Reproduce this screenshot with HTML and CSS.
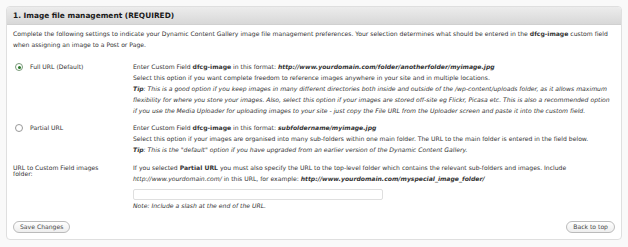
FILE: index.html
```html
<!DOCTYPE html>
<html>
<head>
<meta charset="utf-8">
<link rel="stylesheet" href="styles.css">
</head>
<body>
<div class="postbox">
  <h3 class="hndle">1. Image file management (REQUIRED)</h3>
  <div class="inside">
    <p class="intro">Complete the following settings to indicate your Dynamic Content Gallery image file management preferences. Your selection determines what should be entered in the <b>dfcg-image</b> custom field when assigning an image to a Post or Page.</p>
    <div class="row row-full">
      <div class="label"><span class="radio checked"></span>Full URL (Default)</div>
      <div class="content">
        <div>Enter Custom Field <b>dfcg-image</b> in this format: <b><i>http://www.yourdomain.com/folder/anotherfolder/myimage.jpg</i></b></div>
        <div>Select this option if you want complete freedom to reference images anywhere in your site and in multiple locations.</div>
        <div class="tip"><b>Tip</b>: This is a good option if you keep images in many different directories both inside and outside of the /wp-content/uploads folder, as it allows maximum flexibility for where you store your images. Also, select this option if your images are stored off-site eg Flickr, Picasa etc. This is also a recommended option if you use the Media Uploader for uploading images to your site - just copy the File URL from the Uploader screen and paste it into the custom field.</div>
      </div>
    </div>
    <div class="row row-partial">
      <div class="label"><span class="radio"></span>Partial URL</div>
      <div class="content">
        <div>Enter Custom Field <b>dfcg-image</b> in this format: <b><i>subfoldername/myimage.jpg</i></b></div>
        <div>Select this option if your images are organised into many sub-folders within one main folder. The URL to the main folder is entered in the field below.</div>
        <div class="tip"><b>Tip</b>: This is the "default" option if you have upgraded from an earlier version of the Dynamic Content Gallery.</div>
      </div>
    </div>
    <div class="row row-url">
      <div class="label plain">URL to Custom Field images folder:</div>
      <div class="content">
        <div>If you selected <b>Partial URL</b> you must also specify the URL to the top-level folder which contains the relevant sub-folders and images. Include <i>http://www.yourdomain.com/</i> in this URL, for example: <b><i>http://www.yourdomain.com/myspecial_image_folder/</i></b></div>
        <div class="input"></div>
        <div class="note">Note: Include a slash at the end of the URL.</div>
      </div>
    </div>
    <div class="actions">
      <span class="button">Save Changes</span>
      <span class="button">Back to top</span>
    </div>
  </div>
</div>
</body>
</html>
```
FILE: styles.css
```css
html, body {
  margin: 0;
  padding: 0;
  background: #f9f9f9;
}
body {
  padding: 6px 6px 0 6px;
  font-family: "DejaVu Sans", Verdana, sans-serif;
  font-size: 6.1px;
  color: #333;
}
.postbox {
  width: 616px;
  height: 234px;
  box-sizing: border-box;
  border: 1px solid #dfdfdf;
  border-radius: 4px;
  background: #fff;
  overflow: hidden;
}
.hndle {
  margin: 0;
  height: 18px;
  box-sizing: border-box;
  padding: 0 6px;
  line-height: 18px;
  font-size: 7.4px;
  font-weight: bold;
  color: #1a1a1a;
  background: linear-gradient(#ececec, #d8d8d8);
  border-bottom: 1px solid #d0d0d0;
}
.inside {
  padding: 3px 6px 0 6px;
  line-height: 11px;
}
.intro {
  margin: 0 0 11px 0;
}
.row {
  display: flex;
}
.label {
  width: 118px;
  flex: none;
  display: flex;
  align-items: flex-start;
  padding-left: 2px;
}
.label.plain {
  padding-left: 0;
  line-height: 6px;
  padding-top: 3px;
  width: 100px;
  margin-right: 20px;
}
.content {
  flex: 1;
  padding-right: 1px;
}
.row-partial { margin-top: 6px; }
.row-url { margin-top: 7px; }
.radio {
  width: 6px;
  height: 6px;
  border: 1px solid #999;
  border-radius: 50%;
  margin: 2px 7px 0 0;
  background: #fff;
  position: relative;
  flex: none;
}
.radio.checked {
  border-color: #7a9a7a;
}
.radio.checked::after {
  content: "";
  position: absolute;
  left: 1.5px;
  top: 1.5px;
  width: 3px;
  height: 3px;
  border-radius: 50%;
  background: #2a7a2a;
}
.tip {
  font-style: italic;
}
.input {
  width: 250px;
  height: 11px;
  box-sizing: border-box;
  border: 1px solid #dfdfdf;
  border-radius: 2px;
  margin: 5px 0 0 0;
}
.note {
  font-style: italic;
}
.actions {
  display: flex;
  justify-content: space-between;
  margin-top: 10px;
  padding-right: 0;
}
.button {
  display: inline-block;
  height: 12px;
  line-height: 10px;
  padding: 0 6px;
  box-sizing: border-box;
  border: 1px solid #bbb;
  border-radius: 6px;
  background: linear-gradient(#fff, #eee);
  color: #464646;
}
```
